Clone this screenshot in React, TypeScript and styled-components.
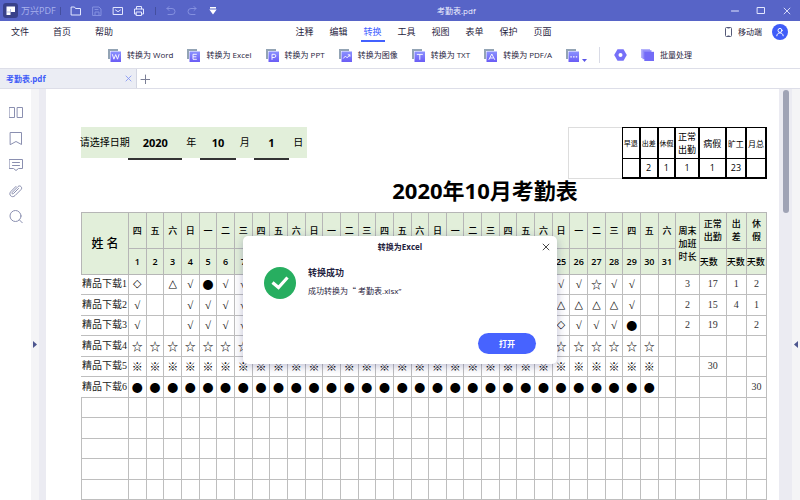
import React from "react";
import styled, { createGlobalStyle } from "styled-components";

const UI_FONT = '"Open Sans", "Noto Sans CJK SC", sans-serif';
const SYMBOL_FONT = '"Noto Sans CJK SC", sans-serif';
const NUMBER_FONT = '"Liberation Serif", "Noto Sans CJK SC", serif';

const GlobalStyle = createGlobalStyle`
  *, *::before, *::after { box-sizing: border-box; }
  body { margin: 0; background: #fff; font-family: ${UI_FONT}; font-size: 9px; line-height: 12px; color: #1f2340; }
  button { border: 0; padding: 0; background: none; font: inherit; color: inherit; }
  a { color: inherit; text-decoration: none; }
  h1, h2, p { margin: 0; }
  svg { display: block; flex: none; }
`;

const AppWindow = styled.div`
  position: relative;
  display: flex;
  flex-direction: column;
  height: 100vh;
  overflow: hidden;
`;

const TitleBar = styled.header`
  display: flex;
  align-items: center;
  flex: none;
  height: 21px;
  background: #5764c7;
  color: #fff;
`;
const TitleLeft = styled.div`
  display: flex;
  align-items: center;
  width: 54%;
  padding-left: 3px;
`;
const Brand = styled.span`
  margin-left: 3px;
  color: #a9b2ec;
`;
const BarDivider = styled.span<{ $left: number; $right: number }>`
  width: 1px;
  height: 8px;
  margin-left: ${(p) => p.$left}px;
  margin-right: ${(p) => p.$right}px;
  background: #444f9f;
`;
const BarIcons = styled.div<{ $gap: number }>`
  display: flex;
  align-items: center;
  gap: ${(p) => p.$gap}px;
`;
const BarButton = styled.button<{ $dim?: boolean }>`
  display: grid;
  place-items: center;
  width: 12px;
  height: 12px;
  color: ${(p) => (p.$dim ? "#8490e0" : "#e3e7ff")};
`;
const FileTitle = styled.span`
  flex: 1;
  padding-left: 5px;
  font-size: 8px;
  color: #eef0ff;
`;
const WindowButtons = styled.div`
  display: flex;
  gap: 14px;
  padding-right: 7px;
`;

const MenuBar = styled.nav`
  display: flex;
  align-items: center;
  flex: none;
  height: 21px;
  padding-right: 12px;
`;
const MenuGroup = styled.div<{ $width?: string; $gap: number }>`
  display: flex;
  gap: ${(p) => p.$gap}px;
  width: ${(p) => p.$width ?? "auto"};
  flex: ${(p) => (p.$width ? "none" : "1")};
`;
const MenuLeft = styled(MenuGroup)`
  padding-left: 11px;
`;
const MenuItem = styled.button<{ $active?: boolean }>`
  position: relative;
  height: 20px;
  color: ${(p) => (p.$active ? "#4361ff" : "#1f2340")};
  &::after {
    content: "";
    display: ${(p) => (p.$active ? "block" : "none")};
    position: absolute;
    left: -3px;
    right: -3px;
    bottom: 0;
    height: 2px;
    background: #4361ff;
  }
`;
const MobileLink = styled.a`
  display: flex;
  align-items: center;
  gap: 6px;
  margin-right: 10px;
  font-size: 8px;
`;
const Avatar = styled.button`
  display: grid;
  place-items: center;
  width: 16px;
  height: 16px;
  border-radius: 50%;
  background: #3f5cf8;
  color: #fff;
`;

const ToolBar = styled.div`
  display: flex;
  align-items: center;
  justify-content: center;
  gap: 14px;
  flex: none;
  height: 27px;
  border-bottom: 1px solid #dddee8;
`;
const ToolButton = styled.button<{ $gap?: number }>`
  display: flex;
  align-items: center;
  gap: ${(p) => p.$gap ?? 6}px;
  font-size: 8px;
  white-space: pre;
`;
const ToolDivider = styled.span`
  width: 1px;
  height: 16px;
  margin-left: -2px;
  background: #d9dbe6;
`;

const TabBar = styled.div`
  display: flex;
  align-items: stretch;
  flex: none;
  height: 20px;
  border-bottom: 1px solid #dddee8;
`;
const FileTab = styled.div`
  display: flex;
  align-items: center;
  justify-content: space-between;
  width: 17%;
  min-width: 137px;
  padding: 0 4px 0 6px;
  border-right: 1px solid #d3d6e2;
  background: #ebedf4;
  font-size: 8px;
  font-weight: 700;
  color: #3f5cf8;
`;
const TabClose = styled.button`
  color: #7d90f5;
`;
const NewTab = styled.button`
  display: grid;
  place-items: center;
  width: 16px;
  color: #7b7f96;
`;

const Workspace = styled.main`
  display: flex;
  flex: 1;
  min-height: 0;
`;
const SideBar = styled.aside`
  display: flex;
  flex-direction: column;
  align-items: center;
  gap: 12px;
  width: 31px;
  padding-top: 17px;
`;
const SideButton = styled.button`
  display: grid;
  place-items: center;
  width: 14px;
  height: 14px;
  color: #8a8fb0;
`;
const FoldStrip = styled.button`
  display: flex;
  align-items: flex-start;
  justify-content: center;
  width: 8px;
  padding-top: 252px;
  background: #f4f4f6;
  color: #4d568f;
`;
const Canvas = styled.div`
  display: flex;
  flex: 1;
  min-width: 0;
  padding-left: 7px;
  background: #ebebf2;
`;
const ScrollTrack = styled.div`
  width: 13px;
  padding: 1px 3px 0 4px;
`;
const ScrollThumb = styled.div`
  height: 123px;
  border-radius: 3px;
  background: #9fa3b5;
`;

const Sheet = styled.article`
  flex: 1;
  min-width: 0;
  overflow: hidden;
  padding: 38px 12px 0 35px;
  background: #fff;
  color: #000;
`;
const SheetTop = styled.div`
  display: flex;
  align-items: flex-start;
  justify-content: space-between;
`;
const DATE_TRACKS = [47, 53, 18, 35, 18, 35, 18];
const DateStrip = styled.div`
  display: grid;
  grid-template-columns: ${DATE_TRACKS.map((w) => `minmax(0, ${w}fr)`).join(" ")};
  width: 33%;
  height: 33px;
  background: linear-gradient(#e2efda 0 0) 0 0 / 100% 31px no-repeat;
  text-align: center;
  line-height: 31px;
  font-size: 10px;
`;
const DateLabel = styled.span`
  display: flex;
  justify-content: center;
  white-space: nowrap;
`;
const DateValue = styled.span`
  border-bottom: 2px solid #333;
  font-size: 11px;
  font-weight: 700;
`;
const Summary = styled.div`
  display: flex;
  width: 29%;
`;
const SummaryBlank = styled.div`
  flex: 53;
  border: 1px solid #ddd;
  border-right: 0;
`;
const SummaryTable = styled.table`
  flex: 145;
  width: 73%;
  table-layout: fixed;
  border-collapse: collapse;
  text-align: center;
`;
const SummaryHead = styled.th<{ $size: number }>`
  height: 31px;
  padding: 0;
  border: 2px solid #000;
  border-width: 1px 2px 1px 1px;
  font-size: ${(p) => p.$size}px;
  font-weight: 400;
  line-height: 13px;
  white-space: pre;
`;
const SummaryCell = styled.td`
  height: 19px;
  padding: 0;
  border: 2px solid #000;
  border-width: 1px 2px 2px 1px;
`;

const SheetTitle = styled.h1`
  padding-left: 122px;
  font-size: 22px;
  line-height: 22px;
  font-weight: 700;
  text-align: center;
`;

const Roster = styled.table`
  width: 100%;
  margin-top: 11px;
  table-layout: fixed;
  border-collapse: collapse;
  text-align: center;
`;
const HeadRow = styled.tr<{ $height: number }>`
  height: ${(p) => p.$height}px;
  background: #e2efda;
`;
const HeadCell = styled.th<{ $big?: boolean; $left?: boolean }>`
  padding: 0;
  border: 1px solid #b6b6b6;
  text-align: ${(p) => (p.$left ? "left" : "center")};
  font-size: ${(p) => (p.$big ? 12 : 9)}px;
  font-weight: 500;
  line-height: 13px;
  white-space: pre;
`;
const DayCell = styled(HeadCell)`
  font-weight: 600;
`;
const BodyRow = styled.tr`
  height: 21px;
  &:nth-child(odd) { height: 20px; }
`;
const Cell = styled.td`
  padding: 0;
  border: 1px solid #bebebe;
`;
const MARK_FONTS: Record<string, string> = {
  "√": '"Liberation Serif", serif',
  "◇": '"DejaVu Sans", sans-serif',
  "△": '"DejaVu Sans", sans-serif',
};
const MarkCell = styled(Cell)<{ $mark?: string }>`
  font-family: ${(p) => MARK_FONTS[p.$mark ?? ""] ?? SYMBOL_FONT};
  font-size: 11px;
`;
const TotalCell = styled(Cell)`
  font-family: ${NUMBER_FONT};
  font-size: 10px;
  color: #333;
`;
const NameCell = styled(Cell)`
  border-left-color: #fff;
  overflow: hidden;
  text-align: left;
  white-space: nowrap;
  font-family: ${NUMBER_FONT};
  font-size: 10px;
  color: #222;
`;

const Overlay = styled.div`
  position: absolute;
  inset: 0;
  display: grid;
  place-items: center;
  padding-top: 100px;
`;
const Dialog = styled.section`
  display: flex;
  flex-direction: column;
  width: 314px;
  border-radius: 5px;
  background: #fff;
  box-shadow: 0 2px 10px rgba(40, 40, 110, 0.3);
  font-size: 8px;
`;
const DialogHead = styled.header`
  display: grid;
  grid-template-columns: 1fr auto 1fr;
  align-items: center;
  height: 21px;
  padding: 0 7px;
`;
const DialogTitle = styled.h2`
  grid-column: 2;
  font-size: 8px;
  line-height: 12px;
`;
const DialogClose = styled.button`
  justify-self: end;
  color: #333;
`;
const DialogBody = styled.div`
  display: flex;
  gap: 12px;
  padding: 10px 21px 0;
`;
const Message = styled.div`
  display: flex;
  flex-direction: column;
  gap: 6px;
`;
const MessageTitle = styled.strong`
  font-size: 9px;
`;
const Quote = styled.span`
  font-family: ${SYMBOL_FONT};
`;
const DialogFoot = styled.footer`
  display: flex;
  justify-content: flex-end;
  padding: 34px 21px 10px;
`;
const OpenButton = styled.button`
  width: 58px;
  height: 21px;
  border-radius: 11px;
  background: #4763ff;
  color: #fff;
  font-weight: 700;
`;

type IconProps = { size?: number; children: React.ReactNode; width?: number };
const Line = ({ size = 12, children, width = 1 }: IconProps) => (
  <svg width={size} height={size} viewBox={`0 0 ${size} ${size}`} fill="none" stroke="currentColor" strokeWidth={width} strokeLinejoin="round" strokeLinecap="round">
    {children}
  </svg>
);

const Logo = () => (
  <svg width="15" height="15" viewBox="0 0 15 15">
    <rect width="15" height="15" rx="3" fill="#39418a" />
    <path d="M3.5 3.5h8.500v5.500H7.500V12h-4z" fill="#fff" />
    <path d="M7.500 6v3M3.500 9h4" stroke="#8f97d6" strokeWidth="0.6" fill="none" />
  </svg>
);

const FormatIcon = ({ kind }: { kind: string }) => (
  <svg width="13" height="13" viewBox="0 0 13 13">
    <defs>
      <linearGradient id={`fmt-${kind}`} x1="0" y1="0" x2="0" y2="1">
        <stop offset="0" stopColor="#8b92ff" />
        <stop offset="1" stopColor="#6a5cf5" />
      </linearGradient>
    </defs>
    <path d="M0 0h10v2H2v8H0z" fill="#93a4b5" />
    <rect x="2.5" y="2.5" width="10.5" height="10.5" fill={`url(#fmt-${kind})`} />
    <g fill="none" stroke="#fff" strokeWidth="0.9">
      {kind === "word" && <path d="M4.3 5.2l1.6 5 1.8-4.6 1.8 4.6 1.6-5" />}
      {kind === "excel" && <path d="M9.8 5.3H6v5h3.8M6 7.8h3.4" />}
      {kind === "ppt" && <path d="M6 10.8V5.3h2.2a1.6 1.6 0 0 1 0 3.2H6" />}
      {kind === "image" && <path d="M4.2 9.5l2.2-2.4 1.7 1.7 2.8-3M8.8 5.8h2.1v2" />}
      {kind === "txt" && <path d="M4.8 5.4h6M7.8 5.4v5.4" />}
      {kind === "pdfa" && <path d="M4.8 10.8l3-5.8 3 5.8M6 9h3.6" />}
      {kind === "more" && <path d="M4.4 7.8h1.4M7.1 7.8h1.4M9.8 7.8h1.4" strokeWidth="1.3" />}
    </g>
  </svg>
);

const CloseIcon = ({ size = 8 }: { size?: number }) => (
  <svg width={size} height={size} viewBox="0 0 8 8" fill="none" stroke="currentColor" strokeWidth="0.9">
    <path d="M0.8 0.8l6.4 6.4M7.2 0.8L0.8 7.2" />
  </svg>
);

const WEEK = ["四", "五", "六", "日", "一", "二", "三"];
const DAYS = Array.from({ length: 31 }, (_, i) => i + 1);
const COLUMNS = [47, ...DAYS.map(() => 17.66), 23.5, 27, 20, 20];
const TOTAL_WIDTH = COLUMNS.reduce((a, b) => a + b, 0);

type Marks = Record<number, string>;
type Person = { name: string; marks: Marks; totals: string[] };
const fill = (from: number, to: number, mark: string): Marks =>
  Object.fromEntries(DAYS.filter((d) => d >= from && d <= to).map((d) => [d, mark]));

const PEOPLE: Person[] = [
  { name: "精品下载1", marks: { ...fill(4, 7, "√"), ...fill(25, 29, "√"), 1: "◇", 3: "△", 5: "●", 27: "☆" }, totals: ["3", "17", "1", "2"] },
  { name: "精品下载2", marks: { 1: "√", ...fill(4, 7, "√"), ...fill(25, 28, "△"), 29: "√" }, totals: ["2", "15", "4", "1"] },
  { name: "精品下载3", marks: { 1: "√", ...fill(4, 7, "√"), 25: "◇", ...fill(26, 28, "√"), 29: "●" }, totals: ["2", "19", "", "2"] },
  { name: "精品下载4", marks: { ...fill(1, 7, "☆"), ...fill(25, 30, "☆") }, totals: ["", "", "", ""] },
  { name: "精品下载5", marks: fill(1, 30, "※"), totals: ["", "30", "", ""] },
  { name: "精品下载6", marks: fill(1, 30, "●"), totals: ["", "", "", "30"] },
];
const EMPTY_ROWS = [1, 2, 3, 4, 5, 6];

const SUMMARY = [
  { label: "早退", value: "", size: 7, width: 17.66 },
  { label: "出差", value: "2", size: 7, width: 17.66 },
  { label: "休假", value: "1", size: 7, width: 17.66 },
  { label: "正常\n出勤", value: "1", size: 9, width: 23.5 },
  { label: "病假", value: "1", size: 9, width: 27 },
  { label: "旷工", value: "23", size: 8, width: 20 },
  { label: "月总", value: "", size: 8, width: 20 },
];
const SUMMARY_WIDTH = SUMMARY.reduce((a, s) => a + s.width, 0);

const TOOLS = [
  ["word", "转换为 Word"],
  ["excel", "转换为 Excel"],
  ["ppt", "转换为 PPT"],
  ["image", "转换为图像"],
  ["txt", "转换为 TXT"],
  ["pdfa", "转换为 PDF/A"],
];

const RosterTable = () => (
  <Roster>
    <colgroup>
      {COLUMNS.map((w, i) => (
        <col key={i} style={{ width: `${(w / TOTAL_WIDTH) * 100}%` }} />
      ))}
    </colgroup>
    <thead>
      <HeadRow $height={36}>
        <HeadCell rowSpan={2} $big>姓 名</HeadCell>
        {DAYS.map((d) => (
          <HeadCell key={d}>{WEEK[(d - 1) % 7]}</HeadCell>
        ))}
        <HeadCell rowSpan={2}>{"周末\n加班\n时长"}</HeadCell>
        <HeadCell>{"正常\n出勤"}</HeadCell>
        <HeadCell>{"出\n差"}</HeadCell>
        <HeadCell>{"休\n假"}</HeadCell>
      </HeadRow>
      <HeadRow $height={26}>
        {DAYS.map((d) => (
          <DayCell key={d}>{d}</DayCell>
        ))}
        <HeadCell $left>天数</HeadCell>
        <HeadCell $left>天数</HeadCell>
        <HeadCell $left>天数</HeadCell>
      </HeadRow>
    </thead>
    <tbody>
      {PEOPLE.map((p) => (
        <BodyRow key={p.name}>
          <NameCell>{p.name}</NameCell>
          {DAYS.map((d) => (
            <MarkCell key={d} $mark={p.marks[d]}>{p.marks[d]}</MarkCell>
          ))}
          {p.totals.map((t, i) => (
            <TotalCell key={i}>{t}</TotalCell>
          ))}
        </BodyRow>
      ))}
      {EMPTY_ROWS.map((r) => (
        <BodyRow key={r}>
          {COLUMNS.map((_, i) => (
            <Cell key={i} />
          ))}
        </BodyRow>
      ))}
    </tbody>
  </Roster>
);

export default function App() {
  return (
    <AppWindow>
      <GlobalStyle />
      <TitleBar>
        <TitleLeft>
          <Logo />
          <Brand>万兴PDF</Brand>
          <BarDivider $left={4} $right={9} />
          <BarIcons $gap={9}>
            <BarButton aria-label="打开文件">
              <Line><path d="M1.5 2h3l1 1.5h5v6.5h-9z" /></Line>
            </BarButton>
            <BarButton aria-label="保存" $dim>
              <Line><path d="M2 2h6l2 2v6.5H2zM4 10V7h4v3M4 4.5h3" /></Line>
            </BarButton>
            <BarButton aria-label="邮件">
              <Line><path d="M1.5 2.5h9v7h-9zM3.5 5L6 6.7 8.5 5" /></Line>
            </BarButton>
            <BarButton aria-label="打印">
              <Line><path d="M3.5 4V1.5h5V4M3.5 9h-2V4h9v5h-2M3.5 7h5v3.5h-5z" /></Line>
            </BarButton>
          </BarIcons>
          <BarDivider $left={10} $right={9} />
          <BarIcons $gap={9}>
            <BarButton aria-label="撤销" $dim>
              <Line><path d="M4 1.5L2 3.5l2 2M2 3.5h5a3 3 0 0 1 0 6H3" /></Line>
            </BarButton>
            <BarButton aria-label="重做" $dim>
              <Line><path d="M8 1.5l2 2-2 2M10 3.5H5a3 3 0 0 0 0 6h4" /></Line>
            </BarButton>
            <BarButton aria-label="更多">
              <svg width="8" height="8" viewBox="0 0 8 8" fill="#fff">
                <path d="M1 0h6v1.4H1zM0.3 2.6h7.4L4 7.4z" />
              </svg>
            </BarButton>
          </BarIcons>
        </TitleLeft>
        <FileTitle>考勤表.pdf</FileTitle>
        <WindowButtons>
          <BarButton aria-label="最小化"><Line><path d="M2.5 6h7" /></Line></BarButton>
          <BarButton aria-label="最大化"><Line><path d="M2.5 2.5h7v6h-7z" /></Line></BarButton>
          <BarButton aria-label="关闭"><CloseIcon /></BarButton>
        </WindowButtons>
      </TitleBar>

      <MenuBar>
        <MenuLeft $width="37.5%" $gap={24}>
          {["文件", "首页", "帮助"].map((m) => (
            <MenuItem key={m}>{m}</MenuItem>
          ))}
        </MenuLeft>
        <MenuGroup $gap={16}>
          {["注释", "编辑", "转换", "工具", "视图", "表单", "保护", "页面"].map((m) => (
            <MenuItem key={m} $active={m === "转换"}>{m}</MenuItem>
          ))}
        </MenuGroup>
        <MobileLink href="#mobile">
          <svg width="7" height="10" viewBox="0 0 7 10" fill="none" stroke="#555a78">
            <rect x="0.5" y="0.5" width="6" height="9" rx="1" />
            <path d="M2.5 1h2M2.5 9h2" />
          </svg>
          移动端
        </MobileLink>
        <Avatar aria-label="账户">
          <Line size={10}>
            <circle cx="5" cy="3.4" r="2" />
            <path d="M1.8 8.8c0-4 6.4-4 6.4 0" />
          </Line>
        </Avatar>
      </MenuBar>

      <ToolBar>
        {TOOLS.map(([kind, label]) => (
          <ToolButton key={kind}>
            <FormatIcon kind={kind} />
            {label}
          </ToolButton>
        ))}
        <ToolButton aria-label="更多格式" $gap={3}>
          <FormatIcon kind="more" />
          <svg width="5" height="13" viewBox="0 0 5 13" fill="#5a55e8"><path d="M0 10h5l-2.5 3z" /></svg>
        </ToolButton>
        <ToolDivider />
        <ToolButton aria-label="设置">
          <svg width="13" height="12" viewBox="0 0 13 12">
            <path d="M3.5 0.3h6L12.8 6l-3.3 5.7h-6L0.2 6z" fill="#7670f8" />
            <circle cx="6.5" cy="6" r="2" fill="#fff" />
          </svg>
        </ToolButton>
        <ToolButton>
          <svg width="13" height="12" viewBox="0 0 13 12">
            <path d="M0 0h9v9H0z" fill="#b3b1fb" />
            <path d="M1.5 1.2h9v9h-9z" fill="#908cf9" />
            <path d="M3.3 2.8H13V12H3.3z" fill="#736bf7" />
          </svg>
          批量处理
        </ToolButton>
      </ToolBar>

      <TabBar>
        <FileTab>
          考勤表.pdf
          <TabClose aria-label="关闭标签"><CloseIcon size={7} /></TabClose>
        </FileTab>
        <NewTab aria-label="新标签">
          <Line size={10}><path d="M5.5 1v9M1 5.5h9" /></Line>
        </NewTab>
      </TabBar>

      <Workspace>
        <SideBar>
          <SideButton aria-label="缩略图">
            <Line size={14}><path d="M0.5 1.5h5v10h-5zM8.5 1.5h5v10h-5z" /></Line>
          </SideButton>
          <SideButton aria-label="书签">
            <Line size={14}><path d="M1.5 0.5h11v12L7 9.500l-5.500 3z" /></Line>
          </SideButton>
          <SideButton aria-label="批注">
            <Line size={14}><path d="M0.5 1.5h13v9h-4L7 12.5l-2.5-2h-4zM3.5 4.5h7M3.5 7.5h7" /></Line>
          </SideButton>
          <SideButton aria-label="附件">
            <Line size={14}>
              <path d="M9.500 4.500l-5 5c-1 1-2.200-0.200-1.200-1.200l5.700-5.700c2-2 5 1 3 3l-6 6c-3 3-7-1-4.200-4l5.200-5.200" />
            </Line>
          </SideButton>
          <SideButton aria-label="搜索">
            <Line size={14}><circle cx="6.5" cy="6" r="5.5" /><path d="M10.5 10l2.800 2.800" /></Line>
          </SideButton>
        </SideBar>
        <FoldStrip aria-label="展开左侧">
          <svg width="4" height="7" viewBox="0 0 4 7" fill="currentColor"><path d="M0 0l4 3.5L0 7z" /></svg>
        </FoldStrip>
        <Canvas>
          <Sheet>
            <SheetTop>
              <DateStrip>
                <DateLabel>请选择日期</DateLabel>
                <DateValue>2020</DateValue>
                <DateLabel>年</DateLabel>
                <DateValue>10</DateValue>
                <DateLabel>月</DateLabel>
                <DateValue>1</DateValue>
                <DateLabel>日</DateLabel>
              </DateStrip>
              <Summary>
                <SummaryBlank />
                <SummaryTable>
                  <colgroup>
                    {SUMMARY.map((s) => (
                      <col key={s.label} style={{ width: `${(s.width / SUMMARY_WIDTH) * 100}%` }} />
                    ))}
                  </colgroup>
                  <thead>
                    <tr>
                      {SUMMARY.map((s) => (
                        <SummaryHead key={s.label} $size={s.size}>{s.label}</SummaryHead>
                      ))}
                    </tr>
                  </thead>
                  <tbody>
                    <tr>
                      {SUMMARY.map((s) => (
                        <SummaryCell key={s.label}>{s.value}</SummaryCell>
                      ))}
                    </tr>
                  </tbody>
                </SummaryTable>
              </Summary>
            </SheetTop>
            <SheetTitle>2020年10月考勤表</SheetTitle>
            <RosterTable />
          </Sheet>
          <ScrollTrack><ScrollThumb /></ScrollTrack>
        </Canvas>
        <FoldStrip aria-label="展开右侧">
          <svg width="4" height="7" viewBox="0 0 4 7" fill="currentColor"><path d="M4 0L0 3.5 4 7z" /></svg>
        </FoldStrip>
      </Workspace>

      <Overlay>
        <Dialog role="dialog" aria-labelledby="dialog-title">
          <DialogHead>
            <DialogTitle id="dialog-title">转换为Excel</DialogTitle>
            <DialogClose aria-label="关闭"><CloseIcon /></DialogClose>
          </DialogHead>
          <DialogBody>
            <svg width="32" height="32" viewBox="0 0 32 32">
              <circle cx="16" cy="16" r="16" fill="#27ae60" />
              <path d="M8.5 15.5l6 5 9-10" fill="none" stroke="#fff" strokeWidth="3.2" />
            </svg>
            <Message>
              <MessageTitle>转换成功</MessageTitle>
              <p>成功转换为<Quote>“</Quote> 考勤表.xlsx”</p>
            </Message>
          </DialogBody>
          <DialogFoot>
            <OpenButton>打开</OpenButton>
          </DialogFoot>
        </Dialog>
      </Overlay>
    </AppWindow>
  );
}
